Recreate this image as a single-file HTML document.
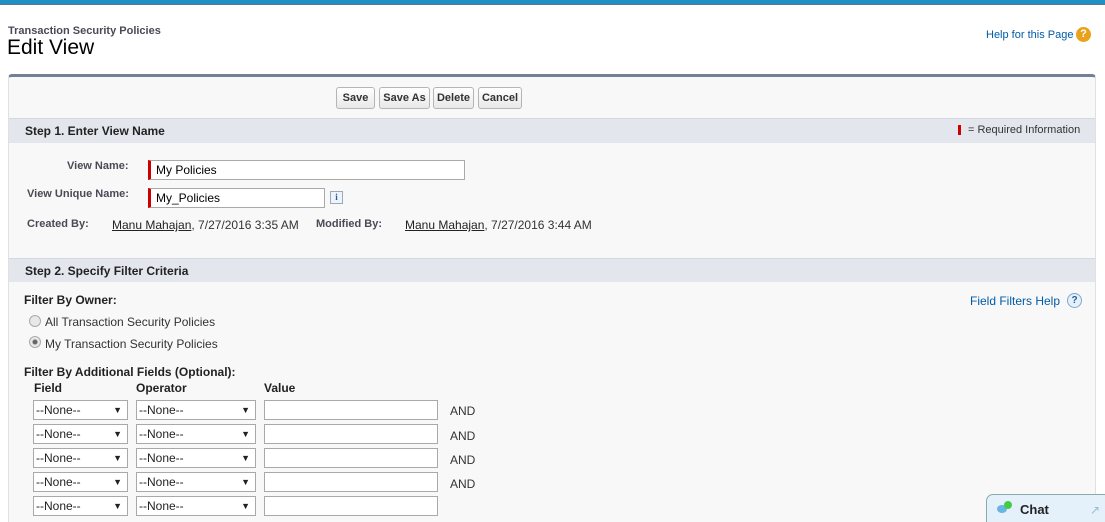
<!DOCTYPE html>
<html><head><style>
*{margin:0;padding:0;box-sizing:border-box}
html,body{width:1105px;height:522px;overflow:hidden}
body{background:#fff;font-family:"Liberation Sans",Arial,sans-serif;position:relative;color:#000}
.a{position:absolute;white-space:nowrap}
.btn{position:absolute;top:87px;height:22px;border:1px solid #b5b5b5;border-radius:3px;background:linear-gradient(#fff,#e8e8e8);font-size:11px;font-weight:bold;color:#333;text-align:center;line-height:20px}
.hdr{position:absolute;left:9px;width:1086px;background:#e3e6ec;border-top:1px solid #d4d8de;font-size:12px;font-weight:bold;color:#222}
.lbl{font-size:11px;font-weight:bold;color:#4a4a56}
.inp{position:absolute;height:20px;border:1px solid #a9a9a9;background:#fff;font-size:12px;line-height:18px;padding-left:5px}
.req{border-left:3px solid #c00}
.sel{position:absolute;height:20px;border:1px solid #a9a9a9;background:#fff;font-size:12px;line-height:18px;padding-left:2px;color:#222}
.sel:after{content:"▼";position:absolute;right:5px;top:0;font-size:9px}
.and{position:absolute;left:450px;font-size:12px;color:#333}
.l{text-decoration:underline;color:#222}
</style></head><body>
<div class="a" style="left:0;top:0;width:1105px;height:5px;background:#1f8fc4;border-bottom:1px solid #5a7a8a"></div>
<div class="a" style="left:8px;top:25px;font-size:11px;font-weight:bold;color:#4a4a56">Transaction Security Policies</div>
<div class="a" style="left:7px;top:36px;font-size:21px;color:#000">Edit View</div>
<div class="a" style="left:986px;top:29px;font-size:11px;color:#015ba7">Help for this Page</div>
<div class="a" style="left:1076px;top:27px;width:15px;height:15px;border-radius:50%;background:#e8a21c;color:#fff;font-size:11px;font-weight:bold;text-align:center;line-height:15px">?</div>
<div class="a" style="left:8px;top:74px;width:1088px;height:448px;background:#f8f8f8;border-top:3px solid #747e96;border-left:1px solid #e0e0e0;border-right:1px solid #e0e0e0;border-radius:4px 4px 0 0"></div>
<div class="btn" style="left:336px;width:39px">Save</div>
<div class="btn" style="left:379px;width:51px">Save As</div>
<div class="btn" style="left:433px;width:41px">Delete</div>
<div class="btn" style="left:478px;width:44px">Cancel</div>
<div class="hdr" style="top:118px;height:25px;line-height:25px;padding-left:16px">Step 1. Enter View Name</div>
<div class="a" style="left:958px;top:125px;width:3px;height:10px;background:#c00"></div>
<div class="a" style="left:968px;top:124px;font-size:11px;color:#333">= Required Information</div>
<div class="a lbl" style="left:67px;top:160px">View Name:</div>
<div class="inp req" style="left:148px;top:160px;width:317px">My Policies</div>
<div class="a lbl" style="left:27px;top:188px">View Unique Name:</div>
<div class="inp req" style="left:148px;top:188px;width:177px">My_Policies</div>
<div class="a" style="left:330px;top:191px;width:13px;height:13px;border:1px solid #9ab;background:#eef4fa;font-size:9px;font-weight:bold;color:#1f5f9f;text-align:center;line-height:11px;font-family:'Liberation Serif',serif">i</div>
<div class="a lbl" style="left:27px;top:218px">Created By:</div>
<div class="a" style="left:112px;top:218px;font-size:12px;color:#333"><span class="l">Manu Mahajan</span>, 7/27/2016 3:35 AM</div>
<div class="a lbl" style="left:316px;top:218px">Modified By:</div>
<div class="a" style="left:405px;top:218px;font-size:12px;color:#333"><span class="l">Manu Mahajan</span>, 7/27/2016 3:44 AM</div>
<div class="hdr" style="top:258px;height:24px;line-height:24px;padding-left:16px">Step 2. Specify Filter Criteria</div>
<div class="a" style="left:24px;top:293px;font-size:12px;font-weight:bold;color:#222">Filter By Owner:</div>
<div class="a" style="left:970px;top:294px;font-size:12px;color:#015ba7">Field Filters Help</div>
<div class="a" style="left:1067px;top:293px;width:15px;height:15px;border-radius:50%;border:1px solid #7aa7d0;background:#e6f0fa;color:#1f5f9f;font-size:10px;font-weight:bold;text-align:center;line-height:13px">?</div>
<div class="a" style="left:29px;top:315px;width:12px;height:12px;border-radius:50%;border:1px solid #aaa;background:#e8e8e8"></div>
<div class="a" style="left:45px;top:315px;font-size:12px;color:#333">All Transaction Security Policies</div>
<div class="a" style="left:29px;top:336px;width:12px;height:12px;border-radius:50%;border:1px solid #aaa;background:radial-gradient(#666 0 2px,#e8e8e8 3px)"></div>
<div class="a" style="left:45px;top:337px;font-size:12px;color:#333">My Transaction Security Policies</div>
<div class="a" style="left:24px;top:365px;font-size:12px;font-weight:bold;color:#222">Filter By Additional Fields (Optional):</div>
<div class="a" style="left:34px;top:381px;font-size:12px;font-weight:bold;color:#222">Field</div>
<div class="a" style="left:136px;top:381px;font-size:12px;font-weight:bold;color:#222">Operator</div>
<div class="a" style="left:264px;top:381px;font-size:12px;font-weight:bold;color:#222">Value</div>
<div class="sel" style="left:33px;top:400px;width:95px">--None--</div><div class="sel" style="left:136px;top:400px;width:120px">--None--</div><div class="inp" style="left:264px;top:400px;width:174px"></div><div class="and" style="top:404px">AND</div>
<div class="sel" style="left:33px;top:424px;width:95px">--None--</div><div class="sel" style="left:136px;top:424px;width:120px">--None--</div><div class="inp" style="left:264px;top:424px;width:174px"></div><div class="and" style="top:429px">AND</div>
<div class="sel" style="left:33px;top:448px;width:95px">--None--</div><div class="sel" style="left:136px;top:448px;width:120px">--None--</div><div class="inp" style="left:264px;top:448px;width:174px"></div><div class="and" style="top:453px">AND</div>
<div class="sel" style="left:33px;top:472px;width:95px">--None--</div><div class="sel" style="left:136px;top:472px;width:120px">--None--</div><div class="inp" style="left:264px;top:472px;width:174px"></div><div class="and" style="top:477px">AND</div>
<div class="sel" style="left:33px;top:496px;width:95px">--None--</div><div class="sel" style="left:136px;top:496px;width:120px">--None--</div><div class="inp" style="left:264px;top:496px;width:174px"></div>
<div class="a" style="left:986px;top:494px;width:125px;height:30px;border:1px solid #8aa;border-radius:7px 7px 0 0;background:#e4f1fb"></div>
<div class="a" style="left:997px;top:505px;width:10px;height:8px;border-radius:50%;background:#6ab4e4"></div>
<div class="a" style="left:1004px;top:501px;width:8px;height:8px;border-radius:50%;background:#4c4"></div>
<div class="a" style="left:1020px;top:502px;font-size:13px;font-weight:bold;color:#222">Chat</div>
<div class="a" style="left:1090px;top:503px;font-size:12px;color:#9bc">↗</div>
</body></html>
